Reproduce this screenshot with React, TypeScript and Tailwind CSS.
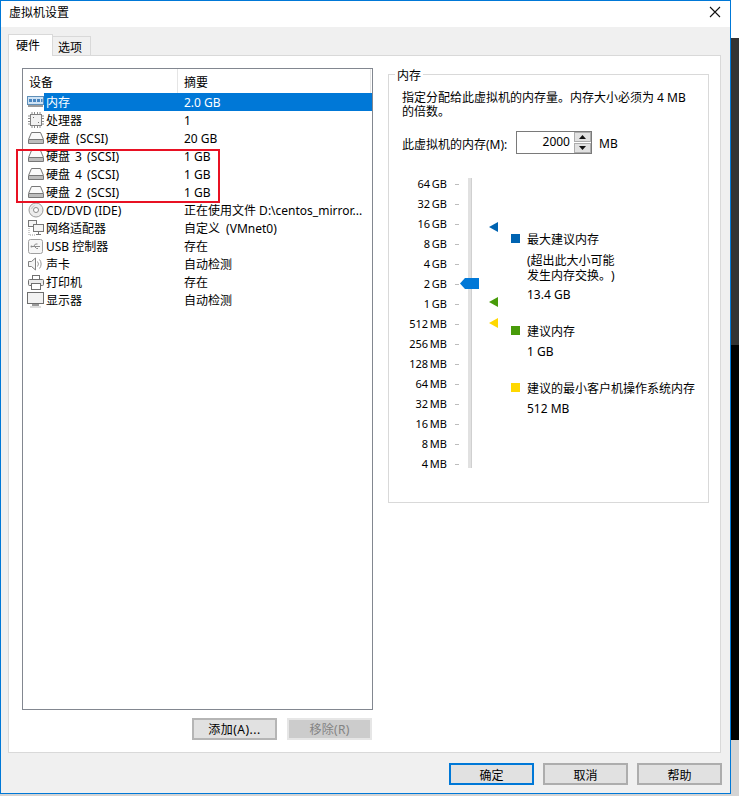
const font = "font-['Noto_Sans','Noto_Sans_CJK_SC',sans-serif]";

function MemoryIcon() {
  return (
    <svg width="17" height="14" viewBox="0 0 17 14" fill="none">
      <rect x="0.5" y="1.5" width="16" height="8" fill="#cfe3f5" stroke="#5f8fb8" />
      <path d="M2 4h3v3H2zM6 4h3v3H6zM10 4h3v3h-3z" fill="#4a86c0" />
      <path d="M14 4h1.5v3H14z" fill="#4a86c0" />
      <path d="M1 11h15" stroke="#9a9a9a" strokeWidth="2" />
    </svg>
  );
}

function CpuIcon() {
  return (
    <svg width="16" height="16" viewBox="0 0 16 16" fill="none">
      <rect x="2.5" y="2.5" width="11" height="11" fill="#f2f2f2" stroke="#808080" />
      <path d="M4 0v2M6.5 0v2M9.5 0v2M12 0v2M4 14v2M6.5 14v2M9.5 14v2M12 14v2M0 4h2M0 6.5h2M0 9.5h2M0 12h2M14 4h2M14 6.5h2M14 9.5h2M14 12h2" stroke="#8c8c8c" />
      <path d="M5 5h1v1H5zM10 10h1v1h-1z" fill="#707070" />
    </svg>
  );
}

function DiskIcon() {
  return (
    <svg width="16" height="14" viewBox="0 0 16 14" fill="none">
      <path d="M3.5 1.5h9l3 7v4h-15v-4z" fill="#fafafa" stroke="#777" />
      <path d="M1 8.5h14" stroke="#777" />
      <rect x="1" y="9" width="14" height="3" fill="#bdbdbd" />
    </svg>
  );
}

function CdIcon() {
  return (
    <svg width="16" height="16" viewBox="0 0 16 16" fill="none">
      <circle cx="8" cy="8" r="7" fill="#ededed" stroke="#9b9b9b" />
      <circle cx="8" cy="8" r="2.5" fill="#fff" stroke="#8a8a8a" />
      <path d="M3.5 7a5 5 0 0 1 3-3.5" stroke="#c4c4c4" />
    </svg>
  );
}

function NetworkIcon() {
  return (
    <svg width="16" height="16" viewBox="0 0 16 16" fill="none">
      <rect x="0.5" y="0.5" width="8" height="6" fill="#f4f4f4" stroke="#777" />
      <rect x="5.5" y="4.5" width="10" height="7" fill="#f4f4f4" stroke="#777" />
      <path d="M10.5 12v2M8 14.5h5" stroke="#777" />
      <path d="M1 8v7h6" stroke="#999" strokeDasharray="1 1" />
    </svg>
  );
}

function UsbIcon() {
  return (
    <svg width="15" height="15" viewBox="0 0 15 15" fill="none">
      <rect x="0.5" y="0.5" width="14" height="14" rx="2" fill="#f6f6f6" stroke="#a0a0a0" />
      <path d="M3 7.5h9M5.5 7.5l2-2.5h2M6.5 7.5l2 2h1.5" stroke="#8a8a8a" />
      <circle cx="3.5" cy="7.5" r="1" fill="#8a8a8a" />
    </svg>
  );
}

function SpeakerIcon() {
  return (
    <svg width="15" height="14" viewBox="0 0 15 14" fill="none">
      <path d="M0.5 4.5h3l4-3.5v12l-4-3.5h-3z" fill="#f4f4f4" stroke="#808080" />
      <path d="M9.5 4.5a4 4 0 0 1 0 5M11.5 2.5a7 7 0 0 1 0 9" stroke="#999" />
    </svg>
  );
}

function PrinterIcon() {
  return (
    <svg width="16" height="15" viewBox="0 0 16 15" fill="none">
      <rect x="4.5" y="0.5" width="7" height="4" fill="#fff" stroke="#707070" />
      <rect x="0.5" y="4.5" width="15" height="6" rx="1" fill="#ececec" stroke="#707070" />
      <rect x="3.5" y="8.5" width="9" height="6" fill="#fff" stroke="#707070" />
    </svg>
  );
}

function MonitorIcon() {
  return (
    <svg width="17" height="16" viewBox="0 0 17 16" fill="none">
      <rect x="0.5" y="0.5" width="16" height="11" fill="#f2f2f2" stroke="#6e6e6e" />
      <path d="M5 13h7" stroke="#9a9a9a" strokeWidth="2" />
      <path d="M3 15h11" stroke="#bbb" />
    </svg>
  );
}

const rows = [
  { icon: <MemoryIcon />, name: "内存", value: "2.0 GB", selected: true },
  { icon: <CpuIcon />, name: "处理器", value: "1" },
  { icon: <DiskIcon />, name: "硬盘 (SCSI)", value: "20 GB", nameClass: "[word-spacing:3px]" },
  { icon: <DiskIcon />, name: "硬盘 3 (SCSI)", value: "1 GB", nameClass: "[word-spacing:2px]" },
  { icon: <DiskIcon />, name: "硬盘 4 (SCSI)", value: "1 GB", nameClass: "[word-spacing:2px]" },
  { icon: <DiskIcon />, name: "硬盘 2 (SCSI)", value: "1 GB", nameClass: "[word-spacing:2px]" },
  { icon: <CdIcon />, name: "CD/DVD (IDE)", value: "正在使用文件 D:\\centos_mirror..." },
  { icon: <NetworkIcon />, name: "网络适配器", value: "自定义 (VMnet0)", valueClass: "[word-spacing:3px]" },
  { icon: <UsbIcon />, name: "USB 控制器", value: "存在" },
  { icon: <SpeakerIcon />, name: "声卡", value: "自动检测" },
  { icon: <PrinterIcon />, name: "打印机", value: "存在" },
  { icon: <MonitorIcon />, name: "显示器", value: "自动检测" },
];

const scale = [
  "64 GB",
  "32 GB",
  "16 GB",
  "8 GB",
  "4 GB",
  "2 GB",
  "1 GB",
  "512 MB",
  "256 MB",
  "128 MB",
  "64 MB",
  "32 MB",
  "16 MB",
  "8 MB",
  "4 MB",
];

function Marker({ color, className }: { color: string; className: string }) {
  return (
    <svg width="9" height="10" viewBox="0 0 9 10" className={className}>
      <path d="M0 5L9 0V10Z" fill={color} />
    </svg>
  );
}

function FooterButton({ label, primary }: { label: string; primary?: boolean }) {
  return (
    <button
      className={
        primary
          ? "w-[85px] h-[22px] pt-[3px] bg-[#e1e1e1] border-2 border-[#0078d7] text-[12px] leading-[14px]"
          : "w-[85px] h-[22px] pt-[3px] bg-[#e1e1e1] border-2 border-[#adadad] text-[12px] leading-[14px]"
      }
    >
      {label}
    </button>
  );
}

export default function App() {
  return (
    <div className={`${font} w-[739px] h-[796px] flex bg-[#d4d4d4] text-[12px] leading-[14px] text-black overflow-hidden [text-spacing-trim:space-all]`}>
      {/* Ventana del diálogo */}
      <div className="w-[731px] h-[794px] shrink-0 flex flex-col border border-[#0078d7] bg-[#f0f0f0]">
        <div className="h-[26px] bg-white flex items-center justify-between pl-[8px] pr-[9px]">
          <span className="-mt-[2px]">虚拟机设置</span>
          <svg width="12" height="12" viewBox="0 0 12 12" className="-mt-[4px]">
            <path d="M1 1l10 10M11 1L1 11" stroke="#111" strokeWidth="1.1" />
          </svg>
        </div>

        {/* Pestañas */}
        <div className="h-[28px] pl-[7px] flex items-end">
          <div className="w-[45px] h-[22px] -mb-[1px] z-10 bg-white border border-b-0 border-[#d9d9d9] pl-[7px] pt-[4px] text-[12px]">
            硬件
          </div>
          <div className="w-[38px] h-[19px] bg-[#f0f0f0] border border-l-0 border-b-0 border-[#d9d9d9] pl-[5px] pt-[4px]">
            选项
          </div>
        </div>

        <div className="ml-[7px] w-[713px] h-[698px] bg-white border border-[#d9d9d9] flex">
          {/* Lista de dispositivos */}
          <div className="relative ml-[13px] mt-[12px] w-[351px] shrink-0">
            <div className="h-[642px] border border-[#828790] flex flex-col">
              <div className="h-[24px] flex shrink-0">
                <div className="w-[155px] border-r border-[#e5e5e5] pl-[6px] pt-[7px]">设备</div>
                <div className="flex-1 mr-[1px] border-r border-[#e5e5e5] pl-[6px] pt-[7px]">摘要</div>
              </div>
              {rows.map((row) => (
                <div key={row.name} className="h-[18px] flex items-center">
                  <div className="w-[21px] flex justify-center items-center pl-[4px] shrink-0">{row.icon}</div>
                  <div
                    className={
                      row.selected
                        ? "flex-1 flex h-[18px] items-center bg-[#0078d7] text-white"
                        : "flex-1 flex h-[18px] items-center"
                    }
                  >
                    <span className={`w-[140px] pl-[2px] pt-[2px] whitespace-nowrap ${row.nameClass ?? ""}`}>{row.name}</span>
                    <span className={`pt-[2px] whitespace-nowrap ${row.valueClass ?? ""}`}>{row.value}</span>
                  </div>
                </div>
              ))}
            </div>
            {/* Recuadro rojo de la captura */}
            <div className="absolute left-[-6px] top-[81px] w-[204px] h-[54px] border-2 border-[#e81123]" />
            <div className="flex justify-end gap-[10px] mt-[8px] pr-[1px]">
              <button className="w-[85px] h-[22px] pt-[2px] bg-[#e1e1e1] border-2 border-[#b5b5b5] tracking-[0.5px]">添加(A)...</button>
              <button className="w-[85px] h-[22px] pt-[2px] bg-[#cccccc] border-2 border-[#e6e6e6] text-[#838383] tracking-[0.3px]">移除(R)</button>
            </div>
          </div>

          {/* Grupo de memoria */}
          <div className="ml-[15px] mt-[18px] w-[321px] h-[429px] border border-[#d9d9d9] shrink-0">
            <div className="-mt-[6px] ml-[6px] w-fit px-[2px] bg-white">内存</div>
            <div className="pl-[13px] pt-[8px]">
              <div className="whitespace-nowrap">指定分配给此虚拟机的内存量。内存大小必须为 4 MB</div>
              <div>的倍数。</div>
              <div className="flex items-center mt-[12px] h-[23px]">
                <span className="w-[114px] pt-[4px] whitespace-nowrap">此虚拟机的内存(M):</span>
                <div className="w-[76px] h-[23px] border border-[#7a7a7a] flex justify-end">
                  <span className="pt-[3px] pr-[4px]">2000</span>
                  <div className="w-[17px] flex flex-col gap-[1px] bg-white">
                    <div className="h-[10px] bg-[#e1e1e1] border border-[#adadad] flex items-center justify-center">
                      <svg width="7" height="4" viewBox="0 0 7 4"><path d="M3.5 0L7 4H0Z" fill="#111" /></svg>
                    </div>
                    <div className="h-[10px] bg-[#e1e1e1] border border-[#adadad] flex items-center justify-center">
                      <svg width="7" height="4" viewBox="0 0 7 4"><path d="M0 0H7L3.5 4Z" fill="#111" /></svg>
                    </div>
                  </div>
                </div>
                <span className="ml-[7px] pt-[2px]">MB</span>
              </div>
            </div>

            {/* Escala de memoria */}
            <div className="flex mt-[20px]">
              <div className="relative w-[70px] shrink-0">
                {scale.map((label, i) => (
                  <div key={i} className="h-[20px] flex items-center">
                    <span className="w-[58px] text-right text-[11px] [word-spacing:-1px] whitespace-nowrap">{label}</span>
                    <span className="ml-[8px] w-[4px] h-[1px] bg-[#bdbdbd]" />
                  </div>
                ))}
                <div className="absolute left-[79px] top-[4px] w-[4px] h-[290px] bg-[#e1e1e1] border-r border-[#d0d0d0]" />
                <svg width="19" height="11" viewBox="0 0 19 11" className="absolute left-[71px] top-[104px]">
                  <path d="M0 5.5L5 0H19V11H5Z" fill="#0078d7" />
                </svg>
                <Marker color="#0063b1" className="absolute left-[100px] top-[48px]" />
                <Marker color="#489b0a" className="absolute left-[100px] top-[123px]" />
                <Marker color="#ffd800" className="absolute left-[100px] top-[144px]" />
              </div>

              <div className="ml-[52px] pt-[59px]">
                <div className="flex items-start">
                  <span className="w-[9px] h-[9px] mt-[1px] bg-[#0063b1]" />
                  <span className="ml-[7px]">最大建议内存</span>
                </div>
                <div className="pl-[16px]">
                  <div className="mt-[7px]">(超出此大小可能</div>
                  <div className="mt-[1px]">发生内存交换。)</div>
                  <div className="mt-[5px]">13.4 GB</div>
                </div>
                <div className="flex items-start mt-[23px]">
                  <span className="w-[9px] h-[9px] mt-[1px] bg-[#489b0a]" />
                  <span className="ml-[7px]">建议内存</span>
                </div>
                <div className="pl-[16px] mt-[6px]">1 GB</div>
                <div className="flex items-start mt-[23px]">
                  <span className="w-[9px] h-[9px] mt-[1px] bg-[#ffd800]" />
                  <span className="ml-[7px] whitespace-nowrap">建议的最小客户机操作系统内存</span>
                </div>
                <div className="pl-[16px] mt-[6px]">512 MB</div>
              </div>
            </div>
          </div>
        </div>

        <div className="flex justify-end gap-[9px] pt-[10px] pr-[8px]">
          <FooterButton label="确定" primary />
          <FooterButton label="取消" />
          <FooterButton label="帮助" />
        </div>
      </div>

      {/* Fondo a la derecha de la ventana */}
      <div className="w-[8px] h-[796px] shrink-0 flex flex-col">
        <div className="h-[38px] bg-white" />
        <div className="h-[307px] bg-[#333333]" />
        <div className="h-[395px] bg-black" />
        <div className="flex-1 bg-[#d4d4d4]" />
      </div>
    </div>
  );
}
